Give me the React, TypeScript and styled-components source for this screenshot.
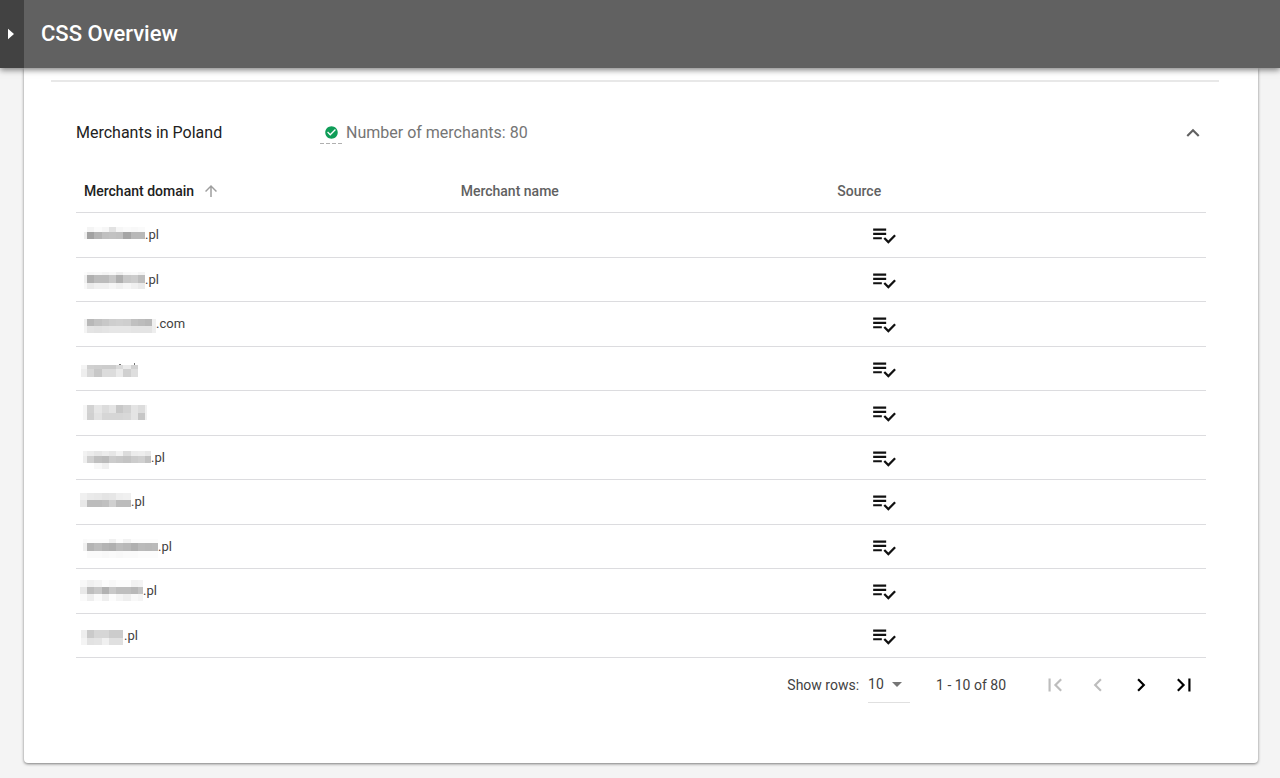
import React, { useState } from "react";
import styled, { createGlobalStyle } from "styled-components";
import {
  MdArrowUpward,
  MdCheckCircle,
  MdChevronLeft,
  MdChevronRight,
  MdFirstPage,
  MdKeyboardArrowUp,
  MdLastPage,
} from "react-icons/md";

const GlobalStyle = createGlobalStyle`
  *, *::before, *::after { box-sizing: border-box; }
  body {
    margin: 0;
    background: #f4f4f4;
    color: #212121;
    font-family: Roboto, "Liberation Sans", sans-serif;
    font-size: 14px;
    line-height: 20px;
  }
`;

const AppBar = styled.header`
  position: sticky;
  top: 0;
  z-index: 1;
  display: flex;
  height: 68px;
  background: #616161;
  box-shadow: 0 2px 6px rgba(0, 0, 0, 0.5);
`;

const DrawerToggle = styled.button`
  display: flex;
  align-items: center;
  justify-content: center;
  width: 24px;
  padding: 0 2px 0 0;
  border: 0;
  background: #424242;
`;

const AppTitle = styled.h1`
  margin: 0;
  padding-left: 17px;
  align-self: center;
  color: #fff;
  font-size: 22px;
  font-weight: 500;
  line-height: 28px;
`;

const Card = styled.main`
  margin: 0 22px 15px 24px;
  padding: 12px 26px 60px;
  border-radius: 0 0 4px 4px;
  background: #fff;
  box-shadow: 0 1px 3px rgba(0, 0, 0, 0.5);
`;

const Divider = styled.hr`
  height: 2px;
  margin: 0 13px 0 1px;
  border: 0;
  background: #e8e8e8;
`;

const Section = styled.section`
  padding: 0 26px;
`;

const SectionHeader = styled.div`
  display: flex;
  align-items: center;
  height: 102px;
  font-size: 16px;
`;

const SectionTitle = styled.h2`
  width: 244px;
  margin: 0;
  font-size: 16px;
  font-weight: 400;
`;

const StatusMark = styled.span`
  display: flex;
  justify-content: center;
  width: 23px;
  height: 22px;
  margin-right: 3px;
  padding-top: 3px;
  background: repeating-linear-gradient(to right, #b0b0b0 0 4px, transparent 4px 6px)
    bottom / 100% 1px no-repeat;
  color: #0f9d58;
`;

const MerchantCount = styled.span`
  color: #757575;
`;

const IconButton = styled.button`
  display: flex;
  padding: 0;
  border: 0;
  background: none;
  color: #000;
  &:disabled { color: #bdbdbd; }
`;

const CollapseButton = styled(IconButton)`
  margin-left: auto;
  color: #616161;
`;

const Table = styled.table`
  width: 100%;
  table-layout: fixed;
  border-collapse: separate;
  border-spacing: 0;
`;

const HeadCell = styled.th<{ $sorted?: boolean }>`
  height: 29px;
  padding: 0 8px 14px;
  border-bottom: 1px solid #dcdcdf;
  color: ${(p) => (p.$sorted ? "#212121" : "#616161")};
  font-size: 14px;
  font-weight: 500;
  line-height: 14px;
  text-align: left;
  vertical-align: bottom;
`;

const SortButton = styled.button`
  display: flex;
  align-items: center;
  gap: 8px;
  height: 14px;
  padding: 0;
  border: 0;
  background: none;
  color: inherit;
  font: inherit;
  svg { color: #9e9e9e; }
`;

const Row = styled.tr`
  height: 44px;
  &:nth-child(odd) { height: 45px; }
`;

const Cell = styled.td`
  padding: 0 4px;
  border-bottom: 1px solid #dcdcdf;
  font-size: 13px;
`;

const Domain = styled.span`
  display: flex;
  align-items: center;
  height: 24px;
  color: #424242;
`;

const SourceIcon = styled.svg`
  display: block;
  margin-left: 38px;
  fill: #111;
`;

const Pager = styled.nav`
  display: flex;
  align-items: center;
  justify-content: flex-end;
  height: 45px;
  padding: 8px 9px 0 0;
  color: #424242;
`;

const SelectBox = styled.span`
  display: flex;
  align-items: center;
  width: 42px;
  height: 36px;
  margin: 0 26px 0 9px;
  border-bottom: 1px solid #e0e0e0;
`;

const RowsSelect = styled.select`
  width: 24px;
  padding: 0;
  border: 0;
  appearance: none;
  background: none;
  color: inherit;
  font: inherit;
`;

const PageButtons = styled.div`
  display: flex;
  gap: 17px;
  margin-left: 36px;
`;

type Strip = { y: number; h: number; tones: string };
type Merchant = { tld: string; width: number; lead: number; strips: Strip[] };

const TILE = 7.25;

// Each strip lists two-digit grey tones, from the narrow leading tile onward.
const merchants: Merchant[] = [
  { tld: ".pl", width: 65, lead: 4, strips: [
    { y: 4, h: 5, tones: "ff f4 fb f6 e2 f6 fa f8 fa" },
    { y: 9, h: 7, tones: "ee a2 b4 c0 c2 c0 a6 b8 b8" } ] },
  { tld: ".pl", width: 65, lead: 4, strips: [
    { y: 4, h: 3, tones: "fc f6 f8 f4 f8 ee f8 fa f4" },
    { y: 7, h: 8, tones: "f0 b0 bc bc c8 b0 c8 cc be" },
    { y: 15, h: 6, tones: "f8 ea f0 f0 f6 f0 f6 f0 ea" } ] },
  { tld: ".com", width: 76, lead: 4, strips: [
    { y: 7, h: 7, tones: "f0 b8 c2 c8 ce d0 ce c0 bc b8 f0" },
    { y: 14, h: 7, tones: "f4 e4 e2 e4 e6 e6 e6 e4 e4 e4 ee" } ] },
  { tld: "", width: 58, lead: 1, strips: [
    { y: 8, h: 4, tones: "f4 d0 ce cc cc da ea d2" },
    { y: 12, h: 8, tones: "ee d8 c8 dc dc ea d0 de" } ] },
  { tld: "", width: 67, lead: 3, strips: [
    { y: 4, h: 8, tones: "f6 d2 e6 dc e4 c8 d2 e4 dc f0" },
    { y: 12, h: 7, tones: "f6 d0 e2 d6 d6 d6 d8 e4 c6 f0" } ] },
  { tld: ".pl", width: 71, lead: 3, strips: [
    { y: 5, h: 5, tones: "f2 ec e6 ec e6 f2 dc ec ee e8" },
    { y: 10, h: 7, tones: "ee d0 c0 bc cc c8 c4 cc d0 c2" },
    { y: 17, h: 6, tones: "ff ff f8 f0" } ] },
  { tld: ".pl", width: 51, lead: 0, strips: [
    { y: 3, h: 7, tones: "f0 ea e8 e4 e6 ee f0" },
    { y: 10, h: 7, tones: "e8 bc bc c0 d0 bc bc" } ] },
  { tld: ".pl", width: 78, lead: 3, strips: [
    { y: 4, h: 4, tones: "fa fc fc fc f0 fc f2 fc fc fc fc" },
    { y: 8, h: 8, tones: "f0 b4 bc b4 b0 bc b8 b0 ba b8 ba" },
    { y: 16, h: 7, tones: "ff fa fa f8 fa f8 fa fa fc fc fc" } ] },
  { tld: ".pl", width: 63, lead: 0, strips: [
    { y: 1, h: 7, tones: "f8 f0 f4 fc f8 fc fc f2 f4" },
    { y: 8, h: 7, tones: "e8 be c8 b2 c8 be be b8 c4" },
    { y: 15, h: 7, tones: "fa ee fa ee fc f4 ee f8 f4" } ] },
  { tld: ".pl", width: 44, lead: 1, strips: [
    { y: 6, h: 8, tones: "ee ca d6 d6 cc cc" },
    { y: 14, h: 7, tones: "f4 e2 e4 f0 e0 e0" } ] },
];

function MaskedName({ merchant }: { merchant: Merchant }) {
  const { width, lead, strips, tld } = merchant;
  return (
    <svg width={width} height="24" viewBox={`0 0 ${width} 24`} aria-hidden="true">
      {strips.flatMap((s) =>
        s.tones.split(" ").map((tone, i) => (
          <rect
            key={`${s.y}-${i}`}
            x={i === 0 ? lead : 7 + (i - 1) * TILE}
            y={s.y}
            width={i === 0 ? 7 - lead : TILE}
            height={s.h}
            fill={`#${tone}${tone}${tone}`}
            shapeRendering="crispEdges"
          />
        ))
      )}
      {tld === "" && width === 58 && (
        <path d="M54 6h1v2h-1zM39 7h2v1h-2z" fill="#757575" />
      )}
    </svg>
  );
}

export default function App() {
  const [rows, setRows] = useState("10");
  return (
    <>
      <GlobalStyle />
      <AppBar>
        <DrawerToggle aria-label="Open navigation">
          <svg width="6" height="12" viewBox="0 0 6 12">
            <path d="M0 0.8 6 6 0 11.2z" fill="#fff" />
          </svg>
        </DrawerToggle>
        <AppTitle>CSS Overview</AppTitle>
      </AppBar>
      <Card>
        <Divider />
        <Section>
          <SectionHeader>
            <SectionTitle>Merchants in Poland</SectionTitle>
            <StatusMark>
              <MdCheckCircle size={15} />
            </StatusMark>
            <MerchantCount>Number of merchants: 80</MerchantCount>
            <CollapseButton aria-label="Collapse section">
              <MdKeyboardArrowUp size={26} />
            </CollapseButton>
          </SectionHeader>
          <Table>
            <thead>
              <tr>
                <HeadCell $sorted aria-sort="ascending">
                  <SortButton>
                    Merchant domain
                    <MdArrowUpward size={18} />
                  </SortButton>
                </HeadCell>
                <HeadCell>Merchant name</HeadCell>
                <HeadCell>Source</HeadCell>
              </tr>
            </thead>
            <tbody>
              {merchants.map((m, i) => (
                <Row key={i}>
                  <Cell>
                    <Domain>
                      <MaskedName merchant={m} />
                      {m.tld}
                    </Domain>
                  </Cell>
                  <Cell />
                  <Cell>
                    <SourceIcon width="26" height="26" viewBox="0 0 24 24" role="img" aria-label="Listed">
                      <path d="M14 10H2v2h12v-2zm0-4H2v2h12V6zM2 16h8v-2H2v2zm19.5-4.5L23 13l-6.99 7-4.51-4.5L13 14l3.01 3 5.49-5.5z" />
                    </SourceIcon>
                  </Cell>
                </Row>
              ))}
            </tbody>
          </Table>
          <Pager aria-label="Pagination">
            <label htmlFor="rows">Show rows:</label>
            <SelectBox>
              <RowsSelect id="rows" value={rows} onChange={(e) => setRows(e.target.value)}>
                <option>10</option>
                <option>25</option>
                <option>50</option>
              </RowsSelect>
              <svg width="10" height="5" viewBox="0 0 10 5" aria-hidden="true">
                <path d="M0 0h10L5 5z" fill="#757575" />
              </svg>
            </SelectBox>
            <span>1 - 10 of 80</span>
            <PageButtons>
              <IconButton disabled aria-label="First page"><MdFirstPage size={26} /></IconButton>
              <IconButton disabled aria-label="Previous page"><MdChevronLeft size={26} /></IconButton>
              <IconButton aria-label="Next page"><MdChevronRight size={26} /></IconButton>
              <IconButton aria-label="Last page"><MdLastPage size={26} /></IconButton>
            </PageButtons>
          </Pager>
        </Section>
      </Card>
    </>
  );
}
